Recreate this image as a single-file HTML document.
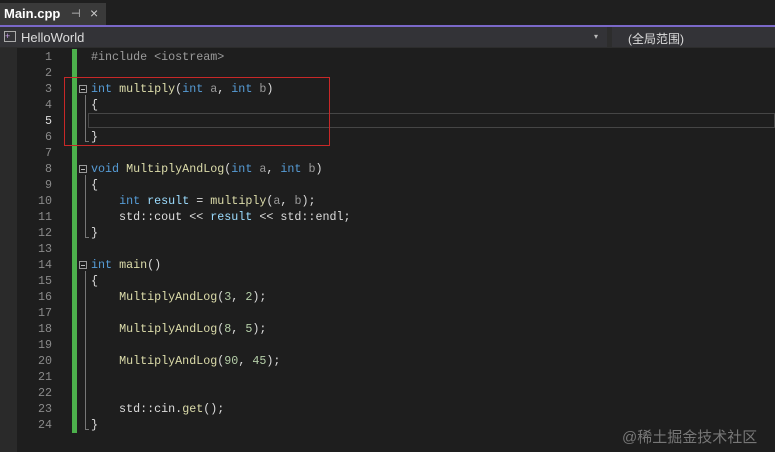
<!DOCTYPE html><html><head><meta charset="utf-8"><style>
body{margin:0;width:775px;height:452px;overflow:hidden;background:#1e1e1e;font-family:"Liberation Sans","Noto Sans CJK SC",sans-serif;position:relative}
.a{position:absolute}
.code{font-family:"Liberation Mono","Noto Sans CJK SC",monospace;font-size:11.7px;white-space:pre;color:#dcdcdc;line-height:16px}
.ln{color:#8a8a8a;width:24px;text-align:right;left:28px}
.k{color:#569cd6}.f{color:#dcdcaa}.p{color:#9a9a9a}.n{color:#b5cea8}.v{color:#9cdcfe}
.fold{position:absolute;left:79px;width:8px;height:8px;border:1px solid #999;box-sizing:border-box}
.fold:after{content:"";position:absolute;left:1px;top:3px;width:4px;height:1px;background:#bbb}
.vl{position:absolute;left:85px;width:1px;background:#777}
.r{position:absolute;background:#c82828;z-index:10}
</style></head><body>
<div class="a" style="left:0;top:0;width:775px;height:25px;background:#1f1f1f"></div>
<div class="a" style="left:0;top:3px;width:106px;height:22px;background:#3a3a3a"></div>
<div class="a" style="left:4px;top:6px;font-size:13px;font-weight:bold;color:#fff">Main.cpp</div>
<div class="a" style="left:71px;top:7px;font-size:11px;color:#ccc">⊣</div>
<div class="a" style="left:90px;top:5px;font-size:14px;color:#ccc">×</div>
<div class="a" style="left:0;top:25px;width:775px;height:2px;background:#7a68c8"></div>
<div class="a" style="left:0;top:27px;width:775px;height:21px;background:#2d2d2d"></div>
<div class="a" style="left:0;top:27px;width:607px;height:20px;background:#333337"></div>
<div class="a" style="left:612px;top:27px;width:163px;height:20px;background:#333337"></div>
<div class="a" style="left:4px;top:31px;width:12px;height:11px;border:1px solid #aaa;box-sizing:border-box;font-size:9px;color:#c8a0e8;line-height:9px">+</div>
<div class="a" style="left:21px;top:30px;font-size:13px;color:#ddd">HelloWorld</div>
<div class="a" style="left:594px;top:32px;font-size:8px;color:#bbb">▾</div>
<div class="a" style="left:628px;top:30px;font-size:12px;color:#ddd">(全局范围)</div>
<div class="a" style="left:0;top:48px;width:17px;height:404px;background:#2a2a2a"></div>
<div class="a" style="left:72px;top:49px;width:5px;height:384px;background:#4cb04c"></div>
<div class="a" style="left:88px;top:113px;width:687px;height:15px;border:1px solid #464646;box-sizing:border-box"></div>
<div class="vl" style="top:95px;height:47px"></div><div class="a" style="left:85px;top:141px;width:4px;height:1px;background:#777"></div>
<div class="vl" style="top:175px;height:63px"></div><div class="a" style="left:85px;top:237px;width:4px;height:1px;background:#777"></div>
<div class="vl" style="top:271px;height:159px"></div><div class="a" style="left:85px;top:429px;width:4px;height:1px;background:#777"></div>
<div class="fold" style="top:85px"></div><div class="fold" style="top:165px"></div><div class="fold" style="top:261px"></div>
<div class="a code" style="left:0;top:49px">
<div class="a ln" style="top:0">1</div><div class="a ln" style="top:16px">2</div><div class="a ln" style="top:32px">3</div><div class="a ln" style="top:48px">4</div><div class="a ln" style="top:64px;color:#ddd">5</div><div class="a ln" style="top:80px">6</div><div class="a ln" style="top:96px">7</div><div class="a ln" style="top:112px">8</div><div class="a ln" style="top:128px">9</div><div class="a ln" style="top:144px">10</div><div class="a ln" style="top:160px">11</div><div class="a ln" style="top:176px">12</div><div class="a ln" style="top:192px">13</div><div class="a ln" style="top:208px">14</div><div class="a ln" style="top:224px">15</div><div class="a ln" style="top:240px">16</div><div class="a ln" style="top:256px">17</div><div class="a ln" style="top:272px">18</div><div class="a ln" style="top:288px">19</div><div class="a ln" style="top:304px">20</div><div class="a ln" style="top:320px">21</div><div class="a ln" style="top:336px">22</div><div class="a ln" style="top:352px">23</div><div class="a ln" style="top:368px">24</div>
<div class="a" style="left:91px;top:0;color:#9b9b9b">#include &lt;iostream&gt;</div>
<div class="a" style="left:91px;top:32px"><span class="k">int</span> <span class="f">multiply</span>(<span class="k">int</span> <span class="p">a</span>, <span class="k">int</span> <span class="p">b</span>)</div>
<div class="a" style="left:91px;top:48px">{</div>
<div class="a" style="left:91px;top:80px">}</div>
<div class="a" style="left:91px;top:112px"><span class="k">void</span> <span class="f">MultiplyAndLog</span>(<span class="k">int</span> <span class="p">a</span>, <span class="k">int</span> <span class="p">b</span>)</div>
<div class="a" style="left:91px;top:128px">{</div>
<div class="a" style="left:91px;top:144px">    <span class="k">int</span> <span class="v">result</span> = <span class="f">multiply</span>(<span class="p">a</span>, <span class="p">b</span>);</div>
<div class="a" style="left:91px;top:160px">    std::cout &lt;&lt; <span class="v">result</span> &lt;&lt; std::endl;</div>
<div class="a" style="left:91px;top:176px">}</div>
<div class="a" style="left:91px;top:208px"><span class="k">int</span> <span class="f">main</span>()</div>
<div class="a" style="left:91px;top:224px">{</div>
<div class="a" style="left:91px;top:240px">    <span class="f">MultiplyAndLog</span>(<span class="n">3</span>, <span class="n">2</span>);</div>
<div class="a" style="left:91px;top:272px">    <span class="f">MultiplyAndLog</span>(<span class="n">8</span>, <span class="n">5</span>);</div>
<div class="a" style="left:91px;top:304px">    <span class="f">MultiplyAndLog</span>(<span class="n">90</span>, <span class="n">45</span>);</div>
<div class="a" style="left:91px;top:352px">    std::cin.<span class="f">get</span>();</div>
<div class="a" style="left:91px;top:368px">}</div>
</div>
<div class="r" style="left:64px;top:77px;width:266px;height:1px"></div>
<div class="r" style="left:64px;top:145px;width:266px;height:1px"></div>
<div class="r" style="left:64px;top:77px;width:1px;height:69px"></div>
<div class="r" style="left:329px;top:77px;width:1px;height:69px"></div>
<div class="a" style="left:622px;top:426px;font-size:15px;color:#777">@稀土掘金技术社区</div>
</body></html>
